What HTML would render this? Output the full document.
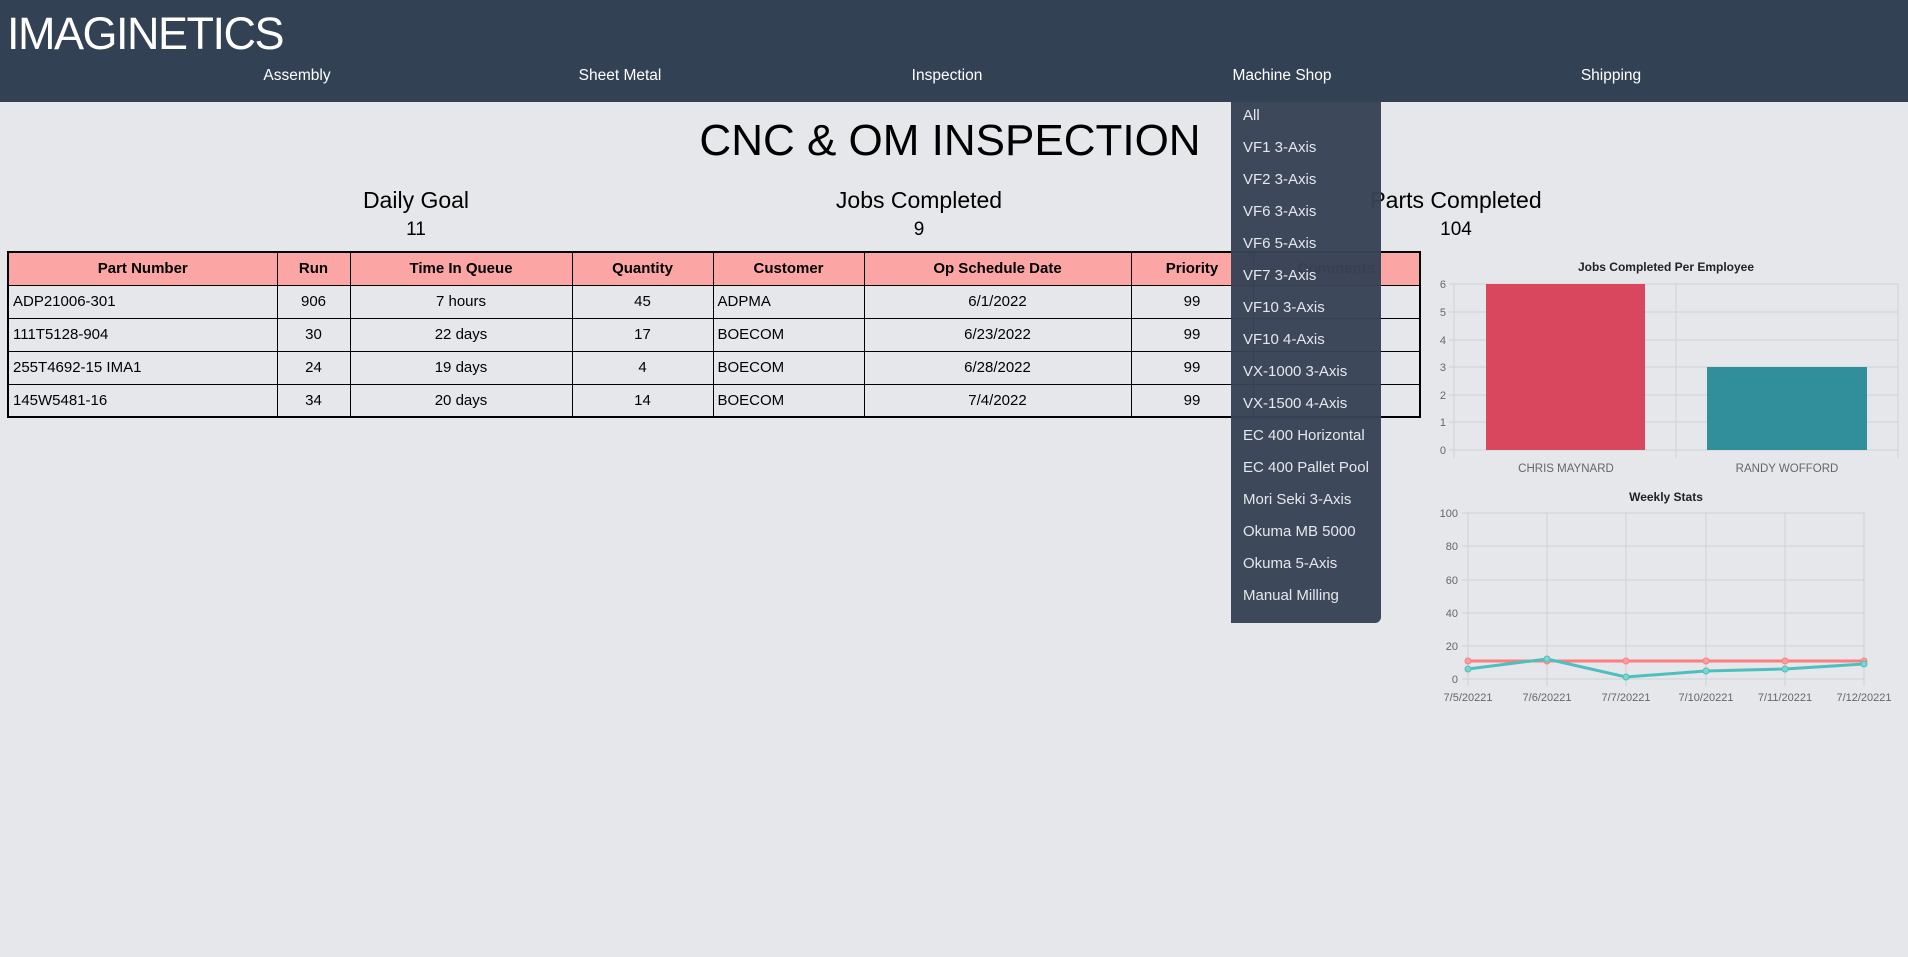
<!DOCTYPE html>
<html><head><meta charset="utf-8"><style>
*{margin:0;padding:0;box-sizing:border-box}
body{width:1908px;height:957px;background:#e5e7eb;font-family:"Liberation Sans",sans-serif;position:relative;overflow:hidden;color:#000}
.hdr{position:absolute;left:0;top:0;width:1908px;height:102px;background:#334155}
.logo{position:absolute;left:7px;top:8px;color:#fff;font-size:45px;letter-spacing:-1.5px}
.nav{position:absolute;top:67px;color:#fff;font-size:15.5px;transform:translateX(-50%);white-space:nowrap}
.t{position:absolute;transform:translateX(-50%);white-space:nowrap}
table{position:absolute;left:7px;top:251px;width:1414px;border-collapse:collapse;border:2px solid #000;font-size:15px;table-layout:fixed}
td,th{height:33px;border:1px solid #000;padding:0 4px}
th{background:#fca5a5;font-weight:bold}
td.c{text-align:center}
.dd{position:absolute;left:1231px;top:102px;width:150px;height:521px;background:rgba(55,67,86,0.97);border-bottom-right-radius:6px}
.dd div{position:absolute;left:12px;color:#e5e7eb;font-size:15px;white-space:nowrap}
svg{position:absolute;left:0;top:0}
</style></head><body>
<div class="hdr">
<div class="logo">IMAGINETICS</div>
<div class="nav" style="left:297px">Assembly</div>
<div class="nav" style="left:620px">Sheet Metal</div>
<div class="nav" style="left:947px">Inspection</div>
<div class="nav" style="left:1282px">Machine Shop</div>
<div class="nav" style="left:1611px">Shipping</div>
</div>
<div class="t" style="left:950px;top:116px;font-size:44px">CNC &amp; OM INSPECTION</div>
<div class="t" style="left:416px;top:187px;font-size:23px">Daily Goal</div>
<div class="t" style="left:416px;top:219px;font-size:19px">11</div>
<div class="t" style="left:919px;top:187px;font-size:23px">Jobs Completed</div>
<div class="t" style="left:919px;top:219px;font-size:19px">9</div>
<div class="t" style="left:1456px;top:187px;font-size:23px">Parts Completed</div>
<div class="t" style="left:1456px;top:219px;font-size:19px">104</div>
<table>
<colgroup><col style="width:269px"><col style="width:73px"><col style="width:222px"><col style="width:141px"><col style="width:151px"><col style="width:267px"><col style="width:122px"><col></colgroup>
<tr><th>Part Number</th><th>Run</th><th>Time In Queue</th><th>Quantity</th><th>Customer</th><th>Op Schedule Date</th><th>Priority</th><th>Comments</th></tr>
<tr><td>ADP21006-301</td><td class="c">906</td><td class="c">7 hours</td><td class="c">45</td><td>ADPMA</td><td class="c">6/1/2022</td><td class="c">99</td><td></td></tr>
<tr><td>111T5128-904</td><td class="c">30</td><td class="c">22 days</td><td class="c">17</td><td>BOECOM</td><td class="c">6/23/2022</td><td class="c">99</td><td></td></tr>
<tr><td>255T4692-15 IMA1</td><td class="c">24</td><td class="c">19 days</td><td class="c">4</td><td>BOECOM</td><td class="c">6/28/2022</td><td class="c">99</td><td></td></tr>
<tr><td>145W5481-16</td><td class="c">34</td><td class="c">20 days</td><td class="c">14</td><td>BOECOM</td><td class="c">7/4/2022</td><td class="c">99</td><td></td></tr>
</table>
<svg width="1908" height="957" font-family="Liberation Sans, sans-serif">
<text x="1666" y="271" font-size="12" font-weight="bold" text-anchor="middle" fill="#222">Jobs Completed Per Employee</text>
<g stroke="#cfd1d5" stroke-width="1">
<line x1="1449" y1="284" x2="1898" y2="284"/><line x1="1449" y1="312" x2="1898" y2="312"/><line x1="1449" y1="340" x2="1898" y2="340"/><line x1="1449" y1="367" x2="1898" y2="367"/><line x1="1449" y1="395" x2="1898" y2="395"/><line x1="1449" y1="422" x2="1898" y2="422"/><line x1="1449" y1="450" x2="1898" y2="450"/>
<line x1="1454" y1="284" x2="1454" y2="458"/><line x1="1676" y1="284" x2="1676" y2="458"/><line x1="1898" y1="284" x2="1898" y2="458"/>
</g>
<rect x="1486" y="284" width="159" height="166" fill="#d9475f"/>
<rect x="1707" y="367" width="160" height="83" fill="#318f9b"/>
<g font-size="11" fill="#666" text-anchor="end">
<text x="1446" y="288">6</text><text x="1446" y="316">5</text><text x="1446" y="344">4</text><text x="1446" y="371">3</text><text x="1446" y="399">2</text><text x="1446" y="426">1</text><text x="1446" y="454">0</text>
</g>
<g font-size="11.5" fill="#666" text-anchor="middle"><text x="1566" y="472">CHRIS MAYNARD</text><text x="1787" y="472">RANDY WOFFORD</text></g>
<text x="1666" y="501" font-size="12" font-weight="bold" text-anchor="middle" fill="#222">Weekly Stats</text>
<g stroke="#cfd1d5" stroke-width="1">
<line x1="1462" y1="513" x2="1864" y2="513"/><line x1="1462" y1="546" x2="1864" y2="546"/><line x1="1462" y1="580" x2="1864" y2="580"/><line x1="1462" y1="613" x2="1864" y2="613"/><line x1="1462" y1="646" x2="1864" y2="646"/><line x1="1462" y1="679" x2="1864" y2="679"/>
<line x1="1468" y1="513" x2="1468" y2="686"/><line x1="1547" y1="513" x2="1547" y2="686"/><line x1="1626" y1="513" x2="1626" y2="686"/><line x1="1706" y1="513" x2="1706" y2="686"/><line x1="1785" y1="513" x2="1785" y2="686"/><line x1="1864" y1="513" x2="1864" y2="686"/>
</g>
<g font-size="11" fill="#666" text-anchor="end">
<text x="1458" y="517">100</text><text x="1458" y="550">80</text><text x="1458" y="584">60</text><text x="1458" y="617">40</text><text x="1458" y="650">20</text><text x="1458" y="683">0</text>
</g>
<g font-size="11" fill="#666" text-anchor="middle"><text x="1468" y="701">7/5/20221</text><text x="1547" y="701">7/6/20221</text><text x="1626" y="701">7/7/20221</text><text x="1706" y="701">7/10/20221</text><text x="1785" y="701">7/11/20221</text><text x="1864" y="701">7/12/20221</text></g>
<polyline points="1468,661 1547,661 1626,661 1706,661 1785,661 1864,661" fill="none" stroke="#fb7f7f" stroke-width="3"/>
<g fill="#f7a0a0" stroke="#fb7f7f"><circle cx="1468" cy="661" r="3"/><circle cx="1547" cy="661" r="3"/><circle cx="1626" cy="661" r="3"/><circle cx="1706" cy="661" r="3"/><circle cx="1785" cy="661" r="3"/><circle cx="1864" cy="661" r="3"/></g>
<polyline points="1468,669 1547,659 1626,677 1706,671 1785,669 1864,664" fill="none" stroke="#4dc0bd" stroke-width="3"/>
<g fill="#7fd3d0" stroke="#4dc0bd"><circle cx="1468" cy="669" r="3"/><circle cx="1547" cy="659" r="3"/><circle cx="1626" cy="677" r="3"/><circle cx="1706" cy="671" r="3"/><circle cx="1785" cy="669" r="3"/><circle cx="1864" cy="664" r="3"/></g>
</svg>
<div class="dd">
<div style="top:5px">All</div>
<div style="top:37px">VF1 3-Axis</div>
<div style="top:69px">VF2 3-Axis</div>
<div style="top:101px">VF6 3-Axis</div>
<div style="top:133px">VF6 5-Axis</div>
<div style="top:165px">VF7 3-Axis</div>
<div style="top:197px">VF10 3-Axis</div>
<div style="top:229px">VF10 4-Axis</div>
<div style="top:261px">VX-1000 3-Axis</div>
<div style="top:293px">VX-1500 4-Axis</div>
<div style="top:325px">EC 400 Horizontal</div>
<div style="top:357px">EC 400 Pallet Pool</div>
<div style="top:389px">Mori Seki 3-Axis</div>
<div style="top:421px">Okuma MB 5000</div>
<div style="top:453px">Okuma 5-Axis</div>
<div style="top:485px">Manual Milling</div>
</div>
</body></html>
